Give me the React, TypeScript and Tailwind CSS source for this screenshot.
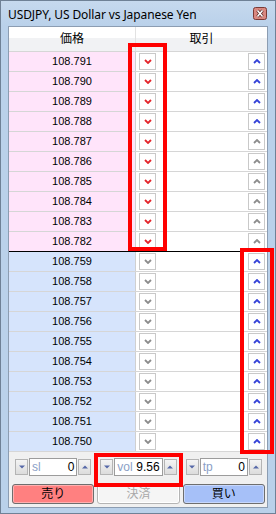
import React from "react"

const sells = [
  { p: "108.791", hot: true },
  { p: "108.790", hot: true },
  { p: "108.789", hot: true },
  { p: "108.788", hot: true },
  { p: "108.787", hot: false },
  { p: "108.786", hot: false },
  { p: "108.785", hot: false },
  { p: "108.784", hot: false },
  { p: "108.783", hot: false },
  { p: "108.782", hot: false },
]

const buys = ["108.759", "108.758", "108.757", "108.756", "108.755", "108.754", "108.753", "108.752", "108.751", "108.750"]

function Chevron({ dir, color }: { dir: "up" | "down"; color: string }) {
  return (
    <svg width="8" height="5" viewBox="0 0 8 5" className="block">
      <path d={dir === "down" ? "M1 1L4 4L7 1" : "M1 4L4 1L7 4"} fill="none" stroke={color} strokeWidth="1.8" />
    </svg>
  )
}

function ArrowBtn({ dir, color }: { dir: "up" | "down"; color: string }) {
  return (
    <div className="w-[17px] h-[17px] border border-[#c9c9c9] bg-white flex items-center justify-center">
      <Chevron dir={dir} color={color} />
    </div>
  )
}

function Row({ price, bg, sell, buy, last }: { price: string; bg: string; sell: string; buy: string; last?: boolean }) {
  return (
    <div className={`flex h-[20px] border-b ${last ? "border-black" : "border-[#d6d6d6]"}`}>
      <div className={`w-[127px] border-r border-[#d0d0d0] ${bg} flex items-center justify-center text-[11px] text-black`}>
        {price}
      </div>
      <div className="flex-1 bg-white flex items-center justify-between pl-[3px] pr-[2px]">
        <ArrowBtn dir="down" color={sell} />
        <ArrowBtn dir="up" color={buy} />
      </div>
    </div>
  )
}

function Tri({ dir }: { dir: "up" | "down" }) {
  return (
    <svg width="6" height="4" viewBox="0 0 6 4" className="block">
      <path d={dir === "down" ? "M0 0.5H6L3 3.5Z" : "M0 3.5H6L3 0.5Z"} fill="#5668a8" />
    </svg>
  )
}

function Spin({ label, value }: { label: string; value: string }) {
  return (
    <div className="flex items-center h-[18px] gap-[1px]">
      <div className="w-[13px] h-[16px] border border-[#b4b4b4] bg-[linear-gradient(#f4f4f4,#dcdcdc)] flex items-center justify-center">
        <Tri dir="down" />
      </div>
      <div className="flex-1 h-[18px] border border-[#9c9c9c] bg-white flex items-center justify-between px-[2px] text-[12px] leading-none">
        <span className="text-[#8ba0c6]">{label}</span>
        <span className="text-black">{value}</span>
      </div>
      <div className="w-[13px] h-[16px] border border-[#b4b4b4] bg-[linear-gradient(#f4f4f4,#dcdcdc)] flex items-center justify-center">
        <Tri dir="up" />
      </div>
    </div>
  )
}

export default function App() {
  return (
    <div className="relative w-[276px] h-[514px] border border-[#6f8196] bg-[#bad1ea] flex flex-col font-['Liberation_Sans','Noto_Sans_CJK_JP',sans-serif]">
      {/* title bar */}
      <div className="h-[25px] flex items-center justify-between pl-[7px] pr-[8px] pt-[3px] bg-[linear-gradient(#c6d9ee,#bad1ea)]">
        <span className="text-[12px] text-black font-['Noto_Sans',sans-serif] tracking-[-0.1px]">USDJPY, US Dollar vs Japanese Yen</span>
        <svg width="14" height="13" viewBox="0 0 14 13" className="block -mt-[4px]">
          <rect x="0.5" y="0.5" width="13" height="12" rx="2" fill="#d98880" stroke="#7a3a36" />
          <path d="M4.5 3.5L9.5 9.5M9.5 3.5L4.5 9.5" stroke="#5a2a28" strokeWidth="3" />
          <path d="M4.5 3.5L9.5 9.5M9.5 3.5L4.5 9.5" stroke="#ffffff" strokeWidth="1.5" />
        </svg>
      </div>

      {/* client panel */}
      <div className="flex-1 mx-[7px] border border-[#8c9db2] bg-[#f0f0f0] flex flex-col">
        <div className="flex h-[25px] border-b border-[#d6d6d6] bg-[linear-gradient(to_bottom,#ffffff_45%,#f1f2f4_45%)] text-[12px] text-black">
          <div className="w-[127px] border-r border-[#e2e2e2] flex items-center justify-center">価格</div>
          <div className="flex-1 flex items-center justify-center">取引</div>
        </div>

        {sells.map((s, i) => (
          <Row key={s.p} price={s.p} bg="bg-[#ffe4fa]" sell="#e4262b" buy={s.hot ? "#3442d8" : "#8c8c8c"} last={i === sells.length - 1} />
        ))}
        {buys.map((p) => (
          <Row key={p} price={p} bg="bg-[#d6e4fc]" sell="#8c8c8c" buy="#3442d8" />
        ))}

        <div className="flex-1 pl-[3px] pr-[2px] pt-[6px]">
          <div className="grid grid-cols-3 gap-[3px]">
            <div className="px-[3px]"><Spin label="sl" value="0" /></div>
            <div className="px-[3px]"><Spin label="vol" value="9.56" /></div>
            <div className="px-[3px]"><Spin label="tp" value="0" /></div>
          </div>
          <div className="grid grid-cols-3 gap-[3px] mt-[8px] h-[20px] text-[12px]">
            <div className="rounded-[3px] border border-[#6e6e6e] bg-[#ff8080] shadow-[inset_0_0_0_1px_#ffb0b0] flex items-center justify-center text-black">売り</div>
            <div className="rounded-[3px] border border-[#b4b4b4] bg-[#f5f5f5] shadow-[inset_0_0_0_1px_#ffffff] flex items-center justify-center text-[#a8a8a8]">決済</div>
            <div className="rounded-[3px] border border-[#6e6e6e] bg-[#a6c0f8] shadow-[inset_0_0_0_1px_#c8d8fc] flex items-center justify-center text-black">買い</div>
          </div>
        </div>
      </div>
      <div className="h-[5px]" />

      {/* annotation boxes */}
      <div className="absolute left-[127px] top-[42px] w-[39px] h-[208px] border-[4px] border-[#ff0000]" />
      <div className="absolute left-[239px] top-[247px] w-[34px] h-[206px] border-[4px] border-[#ff0000]" />
      <div className="absolute left-[93px] top-[452px] w-[89px] h-[34px] border-[4px] border-[#ff0000]" />
    </div>
  )
}
